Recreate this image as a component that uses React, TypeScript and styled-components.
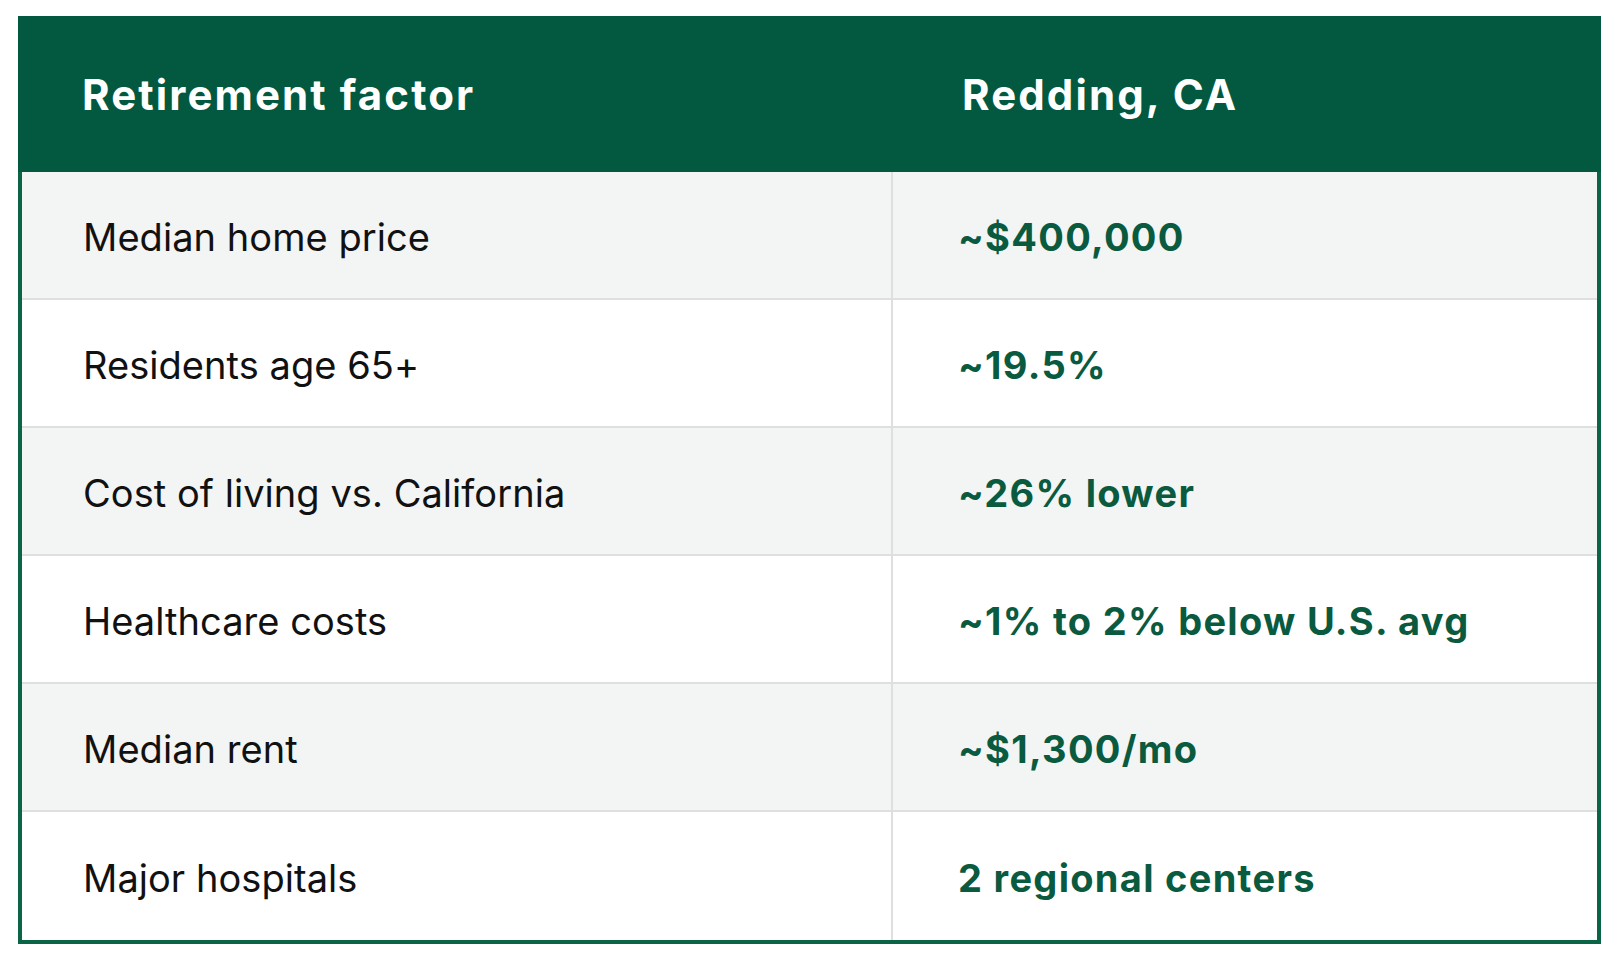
import React from 'react'
import styled, { createGlobalStyle } from 'styled-components'

const GlobalStyle = createGlobalStyle`
  html, body {
    margin: 0;
    padding: 0;
    background: #ffffff;
  }
  body {
    font-family: Inter, "Noto Sans", "Liberation Sans", sans-serif;
  }
`

interface Factor {
  label: string
  value: string
}

const factors: Factor[] = [
  { label: 'Median home price', value: '~$400,000' },
  { label: 'Residents age 65+', value: '~19.5%' },
  { label: 'Cost of living vs. California', value: '~26% lower' },
  { label: 'Healthcare costs', value: '~1% to 2% below U.S. avg' },
  { label: 'Median rent', value: '~$1,300/mo' },
  { label: 'Major hospitals', value: '2 regional centers' },
]

const App: React.FC = () => {
  return (
    <>
      <GlobalStyle />
      <Page>
        <Table>
          <HeaderCell>Retirement factor</HeaderCell>
          <HeaderCell $second>Redding, CA</HeaderCell>
          {factors.map((f, i) => (
            <React.Fragment key={f.label}>
              <LabelCell $shaded={i % 2 === 0} $last={i === factors.length - 1}>
                {f.label}
              </LabelCell>
              <ValueCell $shaded={i % 2 === 0} $last={i === factors.length - 1}>
                {f.value}
              </ValueCell>
            </React.Fragment>
          ))}
        </Table>
      </Page>
    </>
  )
}

const Page = styled.div`
  padding: 16px 23px 24px 18px;
`

const Table = styled.div`
  display: grid;
  grid-template-columns: 871px 1fr;
  grid-template-rows: 156px repeat(6, 128px);
  border: 4px solid #0b6446;
  border-top: none;
  box-sizing: border-box;
  width: 1583px;
`

const HeaderCell = styled.div<{ $second?: boolean }>`
  margin: 0 -4px;
  padding: 0 0 0 ${(props) => (props.$second ? 69 : 64)}px;
  background: #03593f;
  color: #ffffff;
  font-size: 42px;
  font-weight: 700;
  letter-spacing: 2.1px;
  display: flex;
  align-items: center;
  box-sizing: border-box;
  ${(props) => (props.$second ? 'margin-left: 0;' : 'margin-right: 0;')}
`

const Cell = styled.div<{ $shaded: boolean; $last: boolean }>`
  display: flex;
  align-items: center;
  box-sizing: border-box;
  padding-top: 4px;
  background: ${(props) => (props.$shaded ? '#f3f4f4' : '#ffffff')};
  border-bottom: ${(props) => (props.$last ? 'none' : '2px solid #dedfdf')};
  font-size: 38px;
`

const LabelCell = styled(Cell)`
  padding-left: 61px;
  color: #111111;
  font-weight: 400;
  letter-spacing: 0.05px;
  border-right: 2px solid #dedfdf;
`

const ValueCell = styled(Cell)`
  padding-left: 65px;
  color: #0a5a40;
  font-weight: 700;
  letter-spacing: 1.3px;
`

export default App
